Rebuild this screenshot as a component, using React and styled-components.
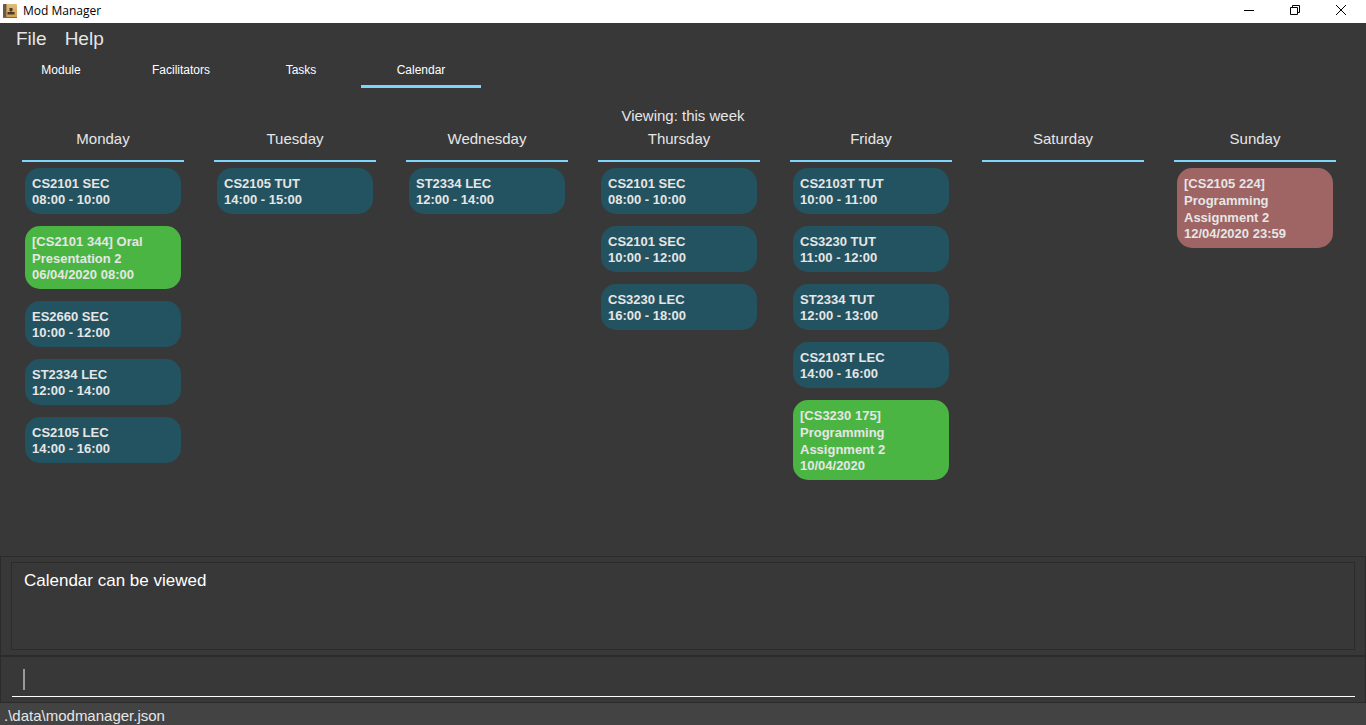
import React from "react";
import styled, { createGlobalStyle } from "styled-components";

const GlobalStyle = createGlobalStyle`
  * { box-sizing: border-box; }
  body {
    margin: 0;
    background: #383838;
    font-family: "Liberation Sans", Arial, sans-serif;
  }
  button, input { font: inherit; }
`;

const Window = styled.div`
  display: flex;
  flex-direction: column;
  min-height: 100vh;
  color: #e6e6e6;
`;

const TitleBar = styled.header`
  display: flex;
  align-items: center;
  justify-content: space-between;
  height: 23px;
  padding: 0 2px 1px 3px;
  background: #ffffff;
  color: #000000;
`;

const Title = styled.h1`
  display: flex;
  align-items: center;
  gap: 6px;
  margin: 0;
  font: 400 12px/16px "Open Sans", "Noto Sans", sans-serif;
`;

const WindowControls = styled.div`
  display: flex;
`;

const ControlButton = styled.button`
  display: flex;
  align-items: center;
  justify-content: center;
  width: 46px;
  height: 22px;
  padding: 0 0 2px;
  border: 0;
  background: none;
  color: #000000;
`;

const MenuBar = styled.nav`
  display: flex;
  gap: 18px;
  padding: 5px 16px 3px;
`;

const MenuButton = styled.button`
  padding: 0;
  border: 0;
  background: none;
  color: #e6e6e6;
  font-size: 19px;
  line-height: 22px;
`;

const TabList = styled.div`
  display: flex;
  padding: 0 1px;
`;

const Tab = styled.button`
  width: 120px;
  height: 35px;
  padding: 1px 0 0;
  border: 0;
  border-bottom: 3px solid ${(p) => (p["aria-selected"] ? "#7dd5fa" : "transparent")};
  background: none;
  color: #ffffff;
  font-size: 12px;
  line-height: 16px;
`;

const Calendar = styled.main`
  flex: 1;
  padding: 19px 30px 24px 22px;
`;

const Caption = styled.h2`
  margin: 0;
  padding-left: 8px;
  font-size: 15px;
  font-weight: 400;
  line-height: 18px;
  text-align: center;
`;

const Week = styled.div`
  display: grid;
  grid-template-columns: repeat(7, minmax(0, 1fr));
  column-gap: 30px;
  padding-top: 4px;
`;

const DayHeading = styled.h3`
  margin: 0 0 6px;
  height: 33px;
  padding-top: 1px;
  border-bottom: 2px solid #7dd5fa;
  font-size: 15px;
  font-weight: 400;
  line-height: 18px;
  text-align: center;
`;

const EntryList = styled.ul`
  display: flex;
  flex-direction: column;
  gap: 12px;
  margin: 0;
  padding: 0 3px;
  list-style: none;
`;

const entryColors = { lesson: "#235360", done: "#4bb543", pending: "#9f6464" };

const Entry = styled.li`
  padding: 7px;
  border-radius: 15px;
  background: ${(p) => entryColors[p.$kind]};
  font-size: 13px;
  font-weight: 700;
`;

const EntryTitle = styled.div`
  max-width: 128px;
  line-height: 17px;
`;

const EntryTime = styled.div`
  line-height: 15px;
`;

const Panel = styled.section`
  padding: 5px 10px;
  border: 1px solid #2b2b2b;
`;

const Result = styled.output`
  display: block;
  height: 88px;
  padding: 8px 12px;
  border: 1px solid #2b2b2b;
  color: #ffffff;
  font-size: 17px;
  line-height: 20px;
`;

const CommandField = styled.label`
  display: flex;
  align-items: center;
  height: 35px;
  margin-left: 1px;
  padding-left: 11px;
  border-bottom: 1px solid #ffffff;
`;

const Caret = styled.span`
  width: 2px;
  height: 21px;
  background: #999999;
`;

const CommandInput = styled.input`
  flex: 1;
  min-width: 0;
  padding: 0;
  border: 0;
  outline: 0;
  background: none;
  color: #ffffff;
  font-size: 17px;
`;

const StatusBar = styled.footer`
  height: 22px;
  padding: 4px 4px 0;
  background: #434343;
  font-size: 15px;
  line-height: 18px;
`;

const tabs = ["Module", "Facilitators", "Tasks", "Calendar"];

const lesson = (title, time) => ({ title, time, kind: "lesson" });

const days = [
  {
    name: "Monday",
    entries: [
      lesson("CS2101 SEC", "08:00 - 10:00"),
      { title: "[CS2101 344] Oral Presentation 2", time: "06/04/2020 08:00", kind: "done" },
      lesson("ES2660 SEC", "10:00 - 12:00"),
      lesson("ST2334 LEC", "12:00 - 14:00"),
      lesson("CS2105 LEC", "14:00 - 16:00"),
    ],
  },
  { name: "Tuesday", entries: [lesson("CS2105 TUT", "14:00 - 15:00")] },
  { name: "Wednesday", entries: [lesson("ST2334 LEC", "12:00 - 14:00")] },
  {
    name: "Thursday",
    entries: [
      lesson("CS2101 SEC", "08:00 - 10:00"),
      lesson("CS2101 SEC", "10:00 - 12:00"),
      lesson("CS3230 LEC", "16:00 - 18:00"),
    ],
  },
  {
    name: "Friday",
    entries: [
      lesson("CS2103T TUT", "10:00 - 11:00"),
      lesson("CS3230 TUT", "11:00 - 12:00"),
      lesson("ST2334 TUT", "12:00 - 13:00"),
      lesson("CS2103T LEC", "14:00 - 16:00"),
      { title: "[CS3230 175] Programming Assignment 2", time: "10/04/2020", kind: "done" },
    ],
  },
  { name: "Saturday", entries: [] },
  {
    name: "Sunday",
    entries: [
      { title: "[CS2105 224] Programming Assignment 2", time: "12/04/2020 23:59", kind: "pending" },
    ],
  },
];

function AppIcon() {
  return (
    <svg width="14" height="14" viewBox="0 0 14 14" aria-hidden="true">
      <defs>
        <linearGradient id="cover" x1="0" y1="0" x2="0" y2="1">
          <stop offset="0" stopColor="#e0bd80" />
          <stop offset="1" stopColor="#d19c45" />
        </linearGradient>
      </defs>
      <rect width="14" height="14" rx="1" fill="url(#cover)" />
      <path d="M1 0h2v14H1a1 1 0 0 1-1-1V1a1 1 0 0 1 1-1z" fill="#65594c" />
      <path d="M3 0h1v14H3z" fill="#b08b55" />
      <path d="M0 13h14v1H0z" fill="#8a6737" />
      <path d="M6.500 4h3v3h-1v1h3v2.500h-7V8h3V7h-1z" fill="#4a3a26" />
    </svg>
  );
}

export default function App() {
  return (
    <>
      <GlobalStyle />
      <Window>
        <TitleBar>
          <Title>
            <AppIcon />
            Mod Manager
          </Title>
          <WindowControls>
            <ControlButton aria-label="Minimize">
              <svg width="10" height="10" shapeRendering="crispEdges" aria-hidden="true">
                <path d="M0 5h10v1H0z" />
              </svg>
            </ControlButton>
            <ControlButton aria-label="Restore">
              <svg width="10" height="10" fill="none" stroke="currentColor" aria-hidden="true">
                <path d="M.5 2.500h7v7h-7zM2.500 2.500v-2h7v7h-2" />
              </svg>
            </ControlButton>
            <ControlButton aria-label="Close">
              <svg width="10" height="10" fill="none" stroke="currentColor" aria-hidden="true">
                <path d="M0 0l10 10M10 0L0 10" />
              </svg>
            </ControlButton>
          </WindowControls>
        </TitleBar>
        <MenuBar>
          <MenuButton>File</MenuButton>
          <MenuButton>Help</MenuButton>
        </MenuBar>
        <TabList role="tablist">
          {tabs.map((name) => (
            <Tab key={name} role="tab" aria-selected={name === "Calendar"}>
              {name}
            </Tab>
          ))}
        </TabList>
        <Calendar>
          <Caption>Viewing: this week</Caption>
          <Week>
            {days.map((day) => (
              <section key={day.name}>
                <DayHeading>{day.name}</DayHeading>
                <EntryList>
                  {day.entries.map((entry) => (
                    <Entry key={entry.title + entry.time} $kind={entry.kind}>
                      <EntryTitle>{entry.title}</EntryTitle>
                      <EntryTime>{entry.time}</EntryTime>
                    </Entry>
                  ))}
                </EntryList>
              </section>
            ))}
          </Week>
        </Calendar>
        <Panel>
          <Result>Calendar can be viewed</Result>
        </Panel>
        <Panel>
          <CommandField>
            <Caret />
            <CommandInput type="text" aria-label="Command" />
          </CommandField>
        </Panel>
        <StatusBar>.\data\modmanager.json</StatusBar>
      </Window>
    </>
  );
}
